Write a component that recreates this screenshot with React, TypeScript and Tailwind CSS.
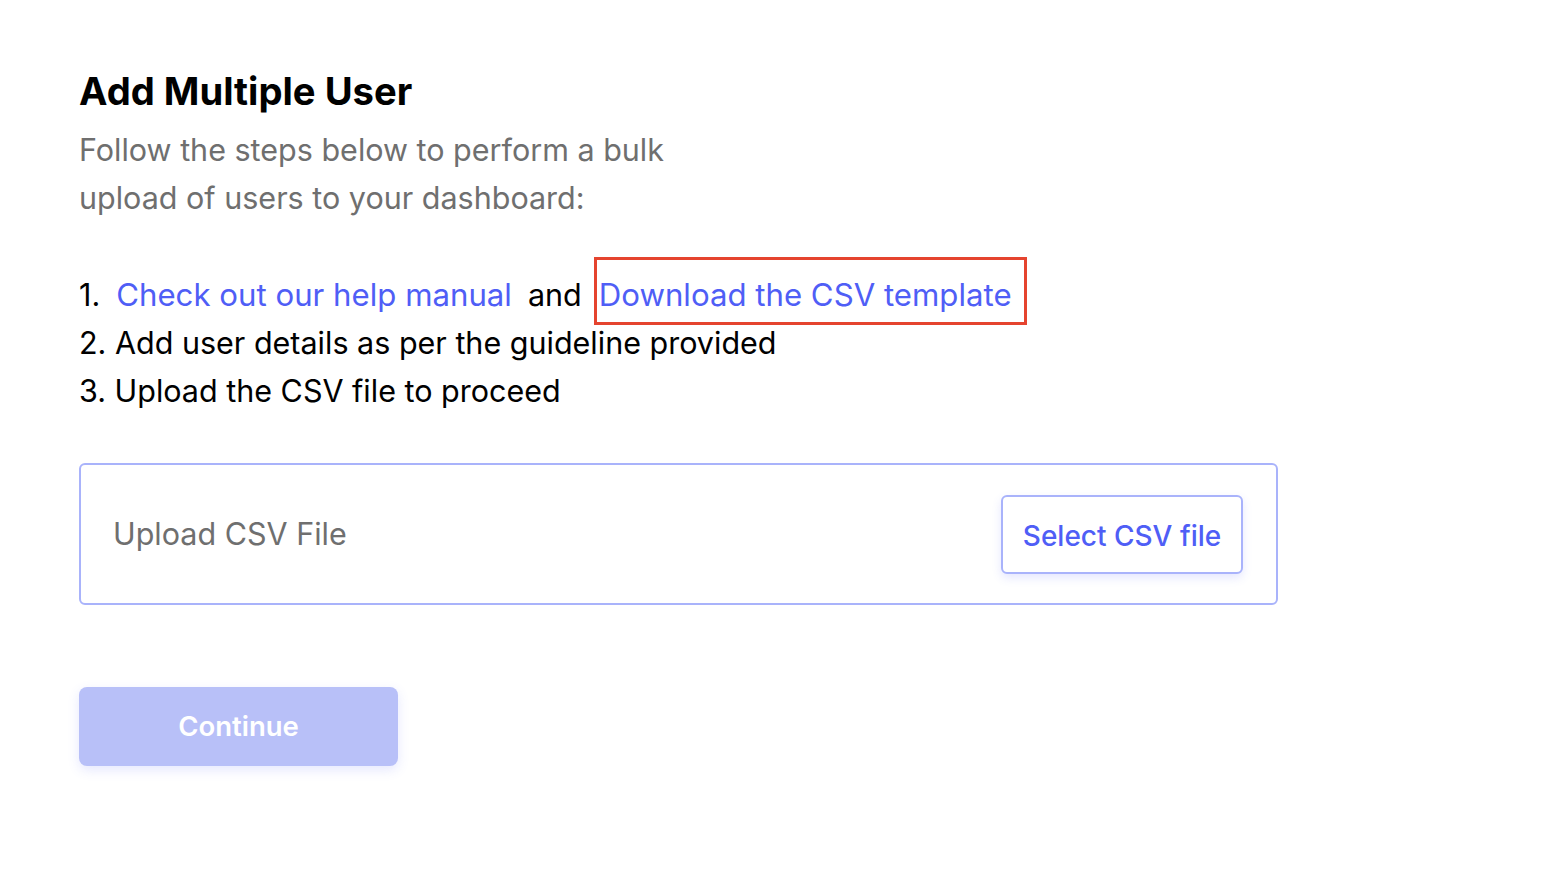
export default function App() {
  return (
    <div
      className="min-h-screen bg-white pl-[79px] pt-[66px] text-black"
      style={{ fontFamily: 'Inter, "Noto Sans", sans-serif' }}
    >
      <h1 className="text-[38.2px] font-bold leading-[50px]">Add Multiple User</h1>
      <p className="mt-[10px] w-[640px] text-[30.5px] leading-[48px] text-[#6f6f6f]">
        Follow the steps below to perform a bulk upload of users to your dashboard:
      </p>

      <ol className="mt-[49px] text-[30.5px] leading-[48px]">
        <li className="flex h-[48px] items-center">
          <span>1.</span>
          <a href="#" className="ml-[16px] text-[31.2px] text-[#4f5ef6]">Check out our help manual</a>
          <span className="ml-[16px]">and</span>
          <a href="#" className="relative ml-[17px] text-[31.2px] text-[#4f5ef6]">
            Download the CSV template
            {/* highlight annotation */}
            <span className="pointer-events-none absolute -bottom-[6px] -left-[5px] -right-[15px] -top-[14px] border-[3px] border-[#e5442f]" />
          </a>
        </li>
        <li>2. Add user details as per the guideline provided</li>
        <li>3. Upload the CSV file to proceed</li>
      </ol>

      <div className="mt-[48px] flex h-[142px] w-[1199px] items-center justify-between rounded-[6px] border-2 border-[#a9b3fb] pl-[32px] pr-[33px]">
        <span className="text-[30.5px] text-[#6f6f6f]">Upload CSV File</span>
        <button className="h-[79px] w-[242px] rounded-[6px] border-2 border-[#a9b3fb] bg-white pt-[4px] text-[28px] font-medium text-[#4f5ef6] shadow-[0_4px_10px_rgba(79,94,246,0.15)]">
          Select CSV file
        </button>
      </div>

      <button className="mt-[82px] h-[79px] w-[319px] rounded-[8px] bg-[#b8c0f8] text-[27.5px] font-semibold text-white shadow-[0_4px_12px_rgba(79,94,246,0.15)]">
        Continue
      </button>
    </div>
  );
}
